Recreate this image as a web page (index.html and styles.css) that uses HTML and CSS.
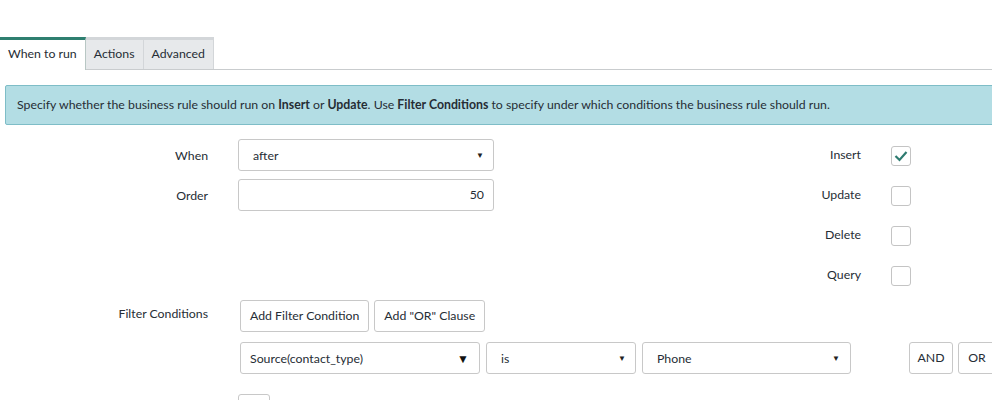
FILE: index.html
```html
<!DOCTYPE html>
<html>
<head>
<meta charset="utf-8">
<link rel="stylesheet" href="styles.css">
</head>
<body>
<div class="page">
  <div class="tabs">
    <div class="tab active">When to run</div>
    <div class="tab">Actions</div>
    <div class="tab">Advanced</div>
  </div>
  <div class="alert">Specify whether the business rule should run on <b>Insert</b> or <b>Update</b>. Use <b>Filter Conditions</b> to specify under which conditions the business rule should run.</div>

  <div class="top">
    <div class="left">
      <div class="row">
        <div class="label">When</div>
        <div class="select field"><span>after</span><span class="arrow">&#9660;</span></div>
      </div>
      <div class="row">
        <div class="label">Order</div>
        <div class="input field">50</div>
      </div>
    </div>
    <div class="right">
      <div class="crow"><div class="clabel">Insert</div><div class="check"><svg width="14" height="12" viewBox="0 0 14 12"><polyline points="1.5,6 5.5,10 12.5,2" fill="none" stroke="#2e7b70" stroke-width="2.2"/></svg></div></div>
      <div class="crow"><div class="clabel">Update</div><div class="check"></div></div>
      <div class="crow"><div class="clabel">Delete</div><div class="check"></div></div>
      <div class="crow"><div class="clabel">Query</div><div class="check"></div></div>
    </div>
  </div>

  <div class="filter">
    <div class="label flabel">Filter Conditions</div>
    <div class="fbody">
      <div class="btns">
        <div class="btn">Add Filter Condition</div>
        <div class="btn">Add "OR" Clause</div>
      </div>
      <div class="cond">
        <div class="select s1"><span>Source(contact_type)</span><span class="arrow big">&#9660;</span></div>
        <div class="select s2"><span>is</span><span class="arrow">&#9660;</span></div>
        <div class="select s3"><span>Phone</span><span class="arrow">&#9660;</span></div>
        <div class="btn andbtn">AND</div>
        <div class="btn orbtn">OR</div>
      </div>
    </div>
  </div>
  <div class="last"><div class="smallbox"></div></div>
</div>
</body>
</html>
```

FILE: styles.css
```css
html, body {
  margin: 0;
  padding: 0;
  background: #fff;
  overflow: hidden;
}
body {
  font-family: Lato, "Open Sans", sans-serif;
  font-size: 12.3px;
  color: #262d35;
}
.page {
  width: 1010px;
  height: 400px;
  overflow: hidden;
}
.tabs {
  margin-top: 37px;
  display: flex;
  border-bottom: 1px solid #c9ccce;
  height: 32px;
}
.tab {
  box-sizing: border-box;
  height: 32px;
  border-top: 3px solid #d3d6d9;
  background: #e7e9eb;
  border-right: 1px solid #d3d6d9;
  padding: 0 8px;
  line-height: 28px;
  white-space: nowrap;
}
.tab.active {
  background: #fff;
  border-top-color: #2e7f70;
  border-right: 1px solid #b8c7c4;
  height: 33px;
  margin-bottom: -1px;
}
.alert {
  margin: 15px 0 0 5px;
  box-sizing: border-box;
  height: 40px;
  background: #b3dde4;
  border: 1px solid #7ebdc7;
  border-radius: 2px;
  padding: 0 11px;
  line-height: 38px;
  white-space: nowrap;
}
.alert b { font-weight: 700; }

.top {
  display: flex;
  margin-top: 10px;
}
.left { width: 494px; }
.row {
  display: flex;
  align-items: center;
  height: 40px;
}
.label {
  width: 208px;
  text-align: right;
  margin-right: 30px;
  flex: none;
}
.field {
  box-sizing: border-box;
  width: 256px;
  height: 32px;
}
.select {
  box-sizing: border-box;
  height: 32px;
  border: 1px solid #c8c8c8;
  border-radius: 3px;
  display: flex;
  align-items: center;
  justify-content: space-between;
  padding: 0 9px 0 14px;
  background: #fff;
}
.arrow {
  font-size: 8px;
  color: #222;
}
.arrow.big {
  font-size: 12px;
  color: #111;
}
.input {
  border: 1px solid #c8c8c8;
  border-radius: 3px;
  text-align: right;
  padding-right: 9px;
  line-height: 30px;
}
.right {
  margin-left: 287px;
}
.crow {
  display: flex;
  align-items: center;
  height: 40px;
}
.clabel {
  width: 80px;
  text-align: right;
  margin-right: 30px;
  margin-top: -1px;
}
.check {
  box-sizing: border-box;
  width: 20px;
  height: 20px;
  border: 1px solid #c4c4c4;
  border-radius: 3px;
  display: flex;
  align-items: center;
  justify-content: center;
  margin-top: 2px;
}

.filter {
  display: flex;
  margin-top: 5px;
}
.flabel {
  padding-top: 4px;
  line-height: 20px;
}
.fbody { margin-left: 2px; }
.btns {
  display: flex;
  gap: 5px;
}
.btn {
  box-sizing: border-box;
  height: 32px;
  line-height: 30px;
  border: 1px solid #c8c8c8;
  border-radius: 3px;
  padding: 0 9px;
  background: #fff;
  white-space: nowrap;
}
.cond {
  display: flex;
  margin-top: 10px;
}
.s1 { width: 240px; padding-left: 9px; padding-right: 10px; }
.s2 { width: 150px; margin-left: 6px; }
.s3 { width: 209px; margin-left: 6px; padding-right: 10px; }
.andbtn { margin-left: 58px; width: 44px; padding: 0; text-align: center; }
.orbtn { margin-left: 5px; width: 38px; padding: 0; text-align: center; }
.last {
  padding-left: 238px;
  margin-top: 20px;
}
.smallbox {
  width: 32px;
  height: 30px;
  box-sizing: border-box;
  border: 1px solid #c8c8c8;
  border-radius: 3px;
}
```
